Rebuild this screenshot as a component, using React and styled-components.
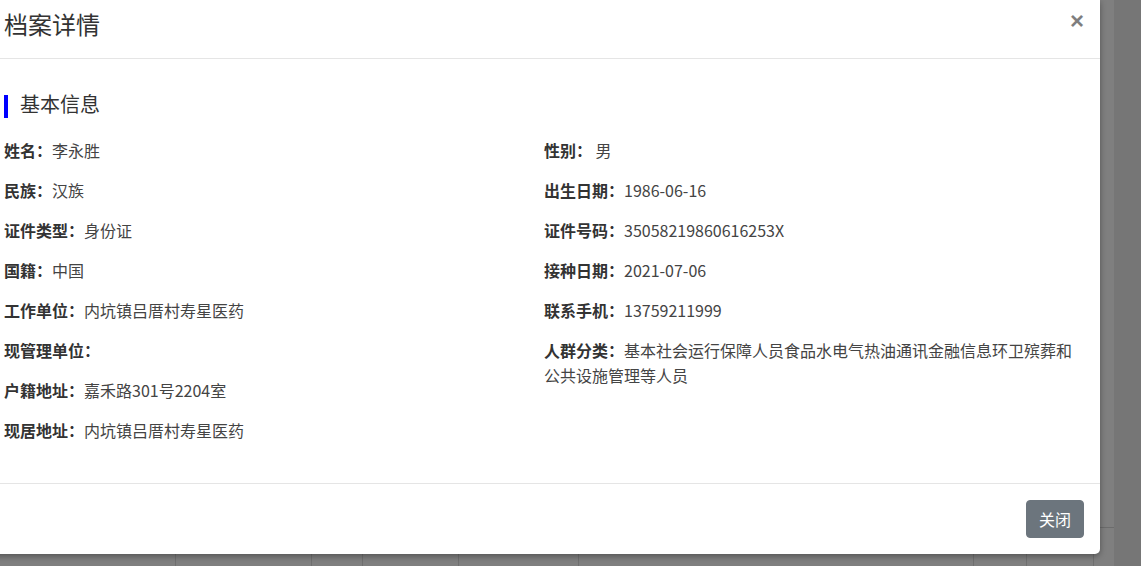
import React from 'react'
import styled, { createGlobalStyle } from 'styled-components'

const GlobalStyle = createGlobalStyle`
    html, body {
        margin: 0;
        padding: 0;
    }

    body {
        font-family: "Noto Sans CJK SC", "Noto Sans", sans-serif;
        overflow: hidden;
    }
`

const Screen = styled.div`
    position: relative;
    display: flex;
    width: 1141px;
    height: 566px;
    overflow: hidden;
`

const Backdrop = styled.div`
    flex: 1;
    display: flex;
    flex-direction: column;
    background: #7f7f7f;
`

const PageTop = styled.div`
    height: 554px;
`

const TableRow = styled.div`
    display: grid;
    grid-template-columns: 175px 136px 51px 96px 120px 395px 53px 67px 1fr;
    height: 40px;
    border-top: 1px solid #6c6c6c;

    div + div {
        border-left: 1px solid #6f6f6f;
    }
`

const ScrollTrack = styled.div`
    width: 27px;
    background: #767676;
`

const Modal = styled.div`
    position: absolute;
    top: 0;
    left: -12px;
    width: 1112px;
    background: #fff;
    border-radius: 0 0 5px 5px;
    box-shadow: 0 2px 6px rgba(0, 0, 0, .35);
    color: #333;
`

const Header = styled.div`
    display: flex;
    align-items: flex-start;
    justify-content: space-between;
    padding: 10px 16px 20px;
    border-bottom: 1px solid #e5e5e5;
`

const Title = styled.h4`
    margin: 0;
    font-size: 24px;
    font-weight: 400;
    line-height: 28px;
    color: #333;
`

const CloseButton = styled.button`
    border: 0;
    background: transparent;
    padding: 0;
    margin-top: 1px;
    font-family: "Liberation Sans", Arial, sans-serif;
    font-size: 24px;
    font-weight: 700;
    line-height: 20px;
    color: #000;
    opacity: .5;
    cursor: pointer;
`

const Body = styled.div`
    padding: 36px 16px 25px;
`

const SectionTitle = styled.h5`
    margin: 0 0 20px;
    padding: 0 0 6px 12px;
    border-left: 4px solid #0000ff;
    font-size: 20px;
    font-weight: 400;
    line-height: 17px;
    color: #333;
`

const Columns = styled.div`
    display: grid;
    grid-template-columns: 1fr 1fr;
`

const Row = styled.p`
    margin: 0 0 15px;
    font-size: 16px;
    line-height: 25px;
    color: #444;

    b {
        font-weight: 700;
        color: #333;
    }
`

const Footer = styled.div`
    display: flex;
    justify-content: flex-end;
    padding: 16px;
    border-top: 1px solid #e5e5e5;
`

const Button = styled.button`
    padding: 6px 12px;
    border: 1px solid #6c757d;
    border-radius: 4px;
    background: #6c757d;
    color: #fff;
    font-family: inherit;
    font-size: 16px;
    line-height: 24px;
    cursor: pointer;
`

const leftFields = [
    ['姓名', '李永胜'],
    ['民族', '汉族'],
    ['证件类型', '身份证'],
    ['国籍', '中国'],
    ['工作单位', '内坑镇吕厝村寿星医药'],
    ['现管理单位', ''],
    ['户籍地址', '嘉禾路301号2204室'],
    ['现居地址', '内坑镇吕厝村寿星医药'],
]

const rightFields = [
    ['性别', ' 男'],
    ['出生日期', '1986-06-16'],
    ['证件号码', '35058219860616253X'],
    ['接种日期', '2021-07-06'],
    ['联系手机', '13759211999'],
    ['人群分类', '基本社会运行保障人员食品水电气热油通讯金融信息环卫殡葬和公共设施管理等人员'],
]

const Field = ({ label, value }) => (
    <Row><b>{label}：</b>{value}</Row>
)

const App = () => {
    return (
        <Screen>
            <GlobalStyle />
            <Backdrop>
                <PageTop />
                <TableRow>
                    {Array.from({ length: 9 }).map((_, i) => <div key={i} />)}
                </TableRow>
            </Backdrop>
            <ScrollTrack />
            <Modal>
                <Header>
                    <Title>档案详情</Title>
                    <CloseButton aria-label='Close'>×</CloseButton>
                </Header>
                <Body>
                    <SectionTitle>基本信息</SectionTitle>
                    <Columns>
                        <div>
                            {leftFields.map(([label, value]) => <Field key={label} label={label} value={value} />)}
                        </div>
                        <div>
                            {rightFields.map(([label, value]) => <Field key={label} label={label} value={value} />)}
                        </div>
                    </Columns>
                </Body>
                <Footer>
                    <Button>关闭</Button>
                </Footer>
            </Modal>
        </Screen>
    )
}

export default App
